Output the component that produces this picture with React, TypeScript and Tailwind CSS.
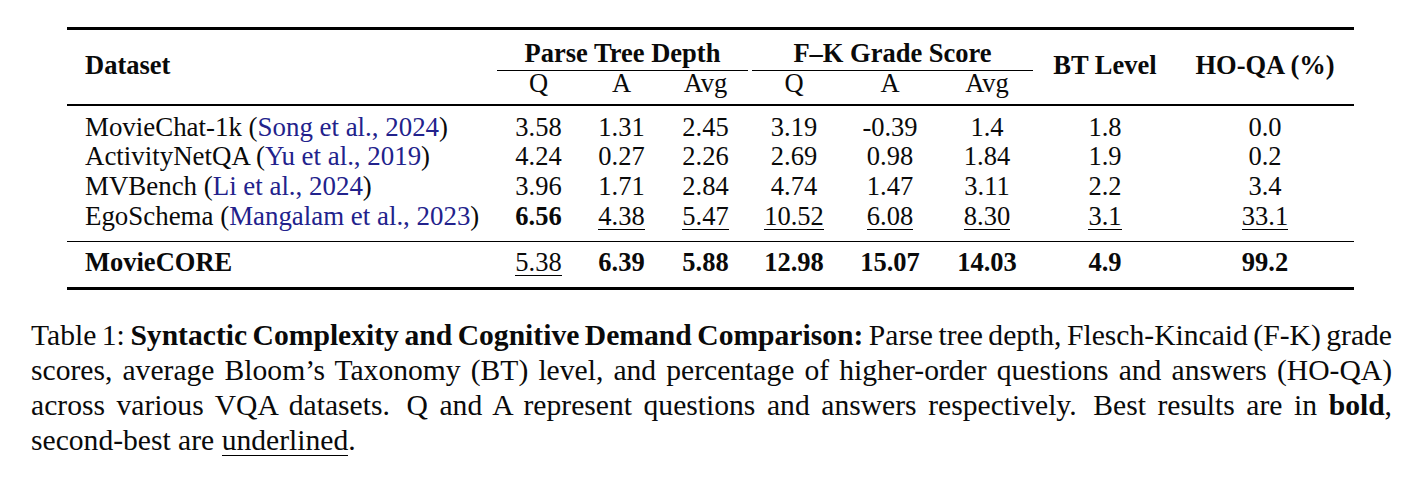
import React from "react";

const CITE = "text-[#22228c]";

function U({ children }: { children: React.ReactNode }) {
  return <span className="inline-block leading-none border-b-[1.4px] border-black">{children}</span>;
}

type Cell = { v: string; b?: boolean; u?: boolean };

const rows: { name: React.ReactNode; cells: Cell[] }[] = [
  {
    name: (
      <>
        MovieChat-1k (<span className={CITE}>Song et al., 2024</span>)
      </>
    ),
    cells: [{ v: "3.58" }, { v: "1.31" }, { v: "2.45" }, { v: "3.19" }, { v: "-0.39" }, { v: "1.4" }, { v: "1.8" }, { v: "0.0" }],
  },
  {
    name: (
      <>
        ActivityNetQA (<span className={CITE}>Yu et al., 2019</span>)
      </>
    ),
    cells: [{ v: "4.24" }, { v: "0.27" }, { v: "2.26" }, { v: "2.69" }, { v: "0.98" }, { v: "1.84" }, { v: "1.9" }, { v: "0.2" }],
  },
  {
    name: (
      <>
        MVBench (<span className={CITE}>Li et al., 2024</span>)
      </>
    ),
    cells: [{ v: "3.96" }, { v: "1.71" }, { v: "2.84" }, { v: "4.74" }, { v: "1.47" }, { v: "3.11" }, { v: "2.2" }, { v: "3.4" }],
  },
  {
    name: (
      <>
        EgoSchema (<span className={CITE}>Mangalam et al., 2023</span>)
      </>
    ),
    cells: [
      { v: "6.56", b: true },
      { v: "4.38", u: true },
      { v: "5.47", u: true },
      { v: "10.52", u: true },
      { v: "6.08", u: true },
      { v: "8.30", u: true },
      { v: "3.1", u: true },
      { v: "33.1", u: true },
    ],
  },
];

const last: Cell[] = [
  { v: "5.38", u: true },
  { v: "6.39", b: true },
  { v: "5.88", b: true },
  { v: "12.98", b: true },
  { v: "15.07", b: true },
  { v: "14.03", b: true },
  { v: "4.9", b: true },
  { v: "99.2", b: true },
];

const GRID = "grid grid-cols-[430px_83px_83px_85px_92px_100px_94px_142px_178px]";

function renderCell(c: Cell, i: number) {
  return (
    <div key={i} className={`text-center ${c.b ? "font-bold" : ""}`}>
      {c.u ? <U>{c.v}</U> : c.v}
    </div>
  );
}

function Sp() {
  return <span className="inline-block w-[5px]" />;
}

export default function App() {
  return (
    <div className="w-[1420px] h-[490px] bg-white text-[#0a0a0a] [font-family:Liberation_Serif,serif] overflow-hidden">
      {/* Table */}
      <div className="ml-[67px] w-[1287px] pt-[27px] text-[26.5px]">
        <div className="h-[3px] bg-black" />
        {/* header */}
        <div className={`${GRID} grid-rows-[41.3px_32.7px] font-bold leading-none`}>
          <div className="row-span-2 flex items-center pl-[18px] pb-[3px]">Dataset</div>
          <div className="col-span-3 h-[41.3px] pt-[9.5px] text-center border-b-[1.3px] border-black">
            Parse Tree Depth
          </div>
          <div className="col-span-3 h-[41.3px] pt-[9.5px] text-center border-b-[1.3px] border-black ml-[4px] mr-[1px]">
            F–K Grade Score
          </div>
          <div className="row-span-2 flex items-center justify-center pb-[3px]">BT Level</div>
          <div className="row-span-2 flex items-center justify-center pb-[3px]">HO-QA (%)</div>
          {["Q", "A", "Avg", "Q", "A", "Avg"].map((t, i) => (
            <div key={i} className="text-center font-normal mt-[-1px]">
              {t}
            </div>
          ))}
        </div>
        <div className="h-[1.8px] bg-black" />
        {/* body */}
        <div className="pt-[7px] pb-[9px] leading-[29.7px]">
          {rows.map((r, ri) => (
            <div key={ri} className={`${GRID} h-[29.7px]`}>
              <div className="pl-[18px] whitespace-nowrap text-[26.9px]">{r.name}</div>
              {r.cells.map(renderCell)}
            </div>
          ))}
        </div>
        <div className="h-[1.8px] bg-black" />
        <div className="pt-[5.6px] pb-[9px] leading-[29.7px]">
          <div className={`${GRID} h-[29.7px]`}>
            <div className="pl-[18px] font-bold">MovieCORE</div>
            {last.map(renderCell)}
          </div>
        </div>
        <div className="h-[3px] bg-black" />
      </div>

      {/* Caption */}
      <div className="ml-[31px] w-[1361px] mt-[28px] text-[29.6px] leading-[35px]">
        <div className="text-justify [text-align-last:justify] whitespace-nowrap [word-spacing:-2.5px]">
          Table 1: <span className="font-bold">Syntactic Complexity and Cognitive Demand Comparison:</span> Parse tree
          depth, Flesch-Kincaid (F-K) grade
        </div>
        <div className="text-justify [text-align-last:justify] whitespace-nowrap">
          scores, average Bloom’s Taxonomy (BT) level, and percentage of higher-order questions and answers (HO-QA)
        </div>
        <div className="text-justify [text-align-last:justify] whitespace-nowrap">
          across various VQA datasets.
          <Sp /> Q and A represent questions and answers respectively.
          <Sp /> Best results are in <span className="font-bold">bold</span>,
        </div>
        <div>
          second-best are <U>underlined</U>.
        </div>
      </div>
    </div>
  );
}
